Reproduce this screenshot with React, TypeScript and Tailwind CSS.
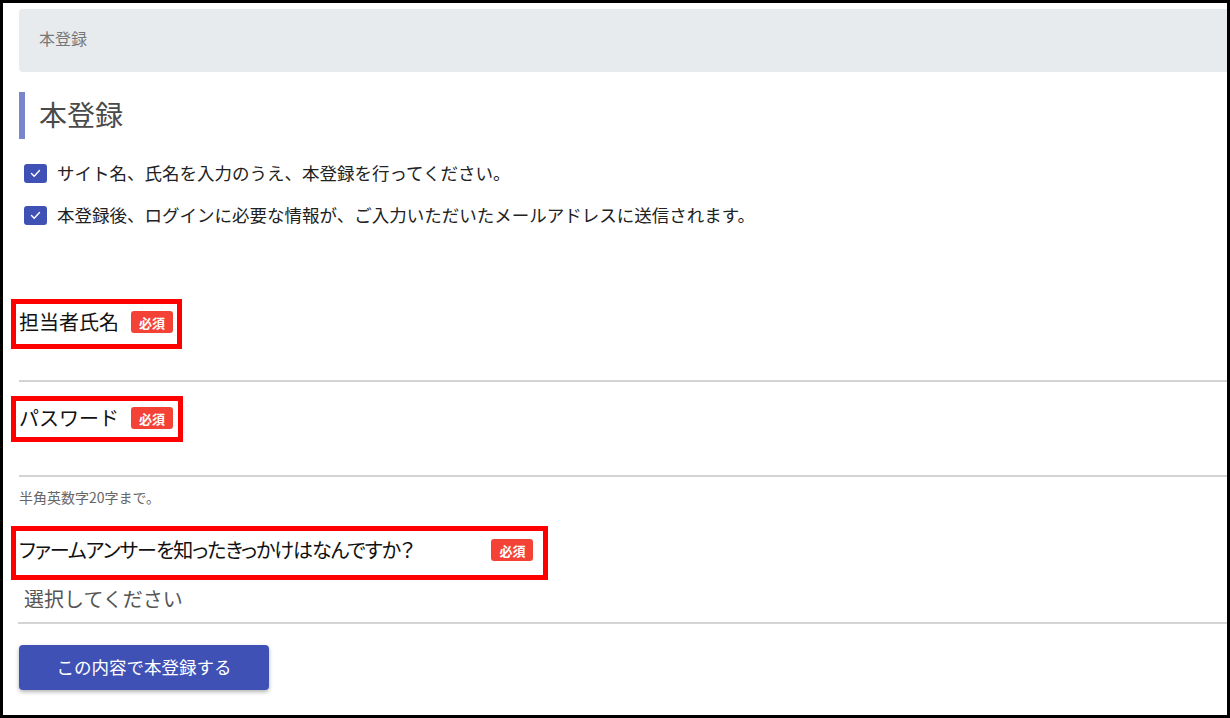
import React from 'react';

const jp = "font-['Noto_Sans_CJK_JP','Noto_Sans',sans-serif]";

function Required({ gap = 'ml-[12px]' }: { gap?: string }) {
  return (
    <span className={`${gap} inline-flex h-[22px] w-[42px] items-center justify-center rounded-[3px] bg-[#f44336] text-[13px] font-bold leading-none text-white`}>
      必須
    </span>
  );
}

function CheckBox() {
  return (
    <span className="ml-[5px] inline-flex h-[19px] w-[23px] shrink-0 items-center justify-center rounded-[3px] bg-[#3f51b5]">
      <svg width="11" height="9" viewBox="0 0 11 9" fill="none">
        <path d="M1.5 4.6 L4.2 7.2 L9.5 1.6" stroke="white" strokeWidth="1.4" strokeLinecap="round" strokeLinejoin="round" />
      </svg>
    </span>
  );
}

// red annotation frame drawn over the label
function Frame({ top, height, width }: { top: string; height: string; width: string }) {
  return <div className={`pointer-events-none absolute left-[-8px] border-[5px] border-[#ff0000] ${top} ${height} ${width}`} />;
}

export default function App() {
  const notes = [
    'サイト名、氏名を入力のうえ、本登録を行ってください。',
    '本登録後、ログインに必要な情報が、ご入力いただいたメールアドレスに送信されます。',
  ];

  return (
    <div className={`h-[718px] w-[1230px] overflow-hidden border-[3px] border-black bg-white ${jp}`}>
      <div className="pl-[16px] pt-[6px]">
        {/* breadcrumb */}
        <div className="flex h-[63px] items-center rounded-l-[4px] bg-[#e8ebee] pb-[5px] pl-[20px] text-[16px] text-[#777777]">
          本登録
        </div>

        {/* heading */}
        <div className="mt-[20px] flex items-center">
          <div className="h-[47px] w-[6px] bg-[#7986cb]" />
          <h1 className="ml-[14px] pb-[3px] text-[28px] leading-none text-[#4a4a4a]">本登録</h1>
        </div>

        {/* notes */}
        <ul className="mt-[13px]">
          {notes.map((n) => (
            <li key={n} className="flex h-[42px] items-center gap-[10px] text-[17.5px] text-[#222222]">
              <CheckBox />
              <span>{n}</span>
            </li>
          ))}
        </ul>

        {/* name */}
        <div className="mt-[66px]">
          <div className="relative flex h-[40px] items-center text-[20px] text-[#111111]">
            <Frame top="top-[-3px]" height="h-[50px]" width="w-[171px]" />
            <span>担当者氏名</span>
            <Required />
          </div>
          <div className="h-[40px] border-b-2 border-[#d4d4d4]" />
        </div>

        {/* password */}
        <div className="mt-[16px]">
          <div className="relative flex h-[40px] items-center text-[20px] text-[#111111]">
            <Frame top="top-[-2px]" height="h-[46px]" width="w-[172px]" />
            <span>パスワード</span>
            <Required />
          </div>
          <div className="h-[39px] border-b-2 border-[#d4d4d4]" />
          <p className="mt-[11px] text-[14px] leading-[18px] text-[#666666]">半角英数字20字まで。</p>
        </div>

        {/* source */}
        <div className="mt-[24px]">
          <div className="relative flex h-[40px] items-center text-[20px] text-[#111111]">
            <Frame top="top-[-4px]" height="h-[54px]" width="w-[537px]" />
            <span className="tracking-[-1px] [font-feature-settings:'palt']">ファームアンサーを知ったきっかけはなんですか？</span>
            <Required gap="ml-[78px]" />
          </div>
          <div className="-ml-[1px] h-[54px] border-b-2 border-[#d4d4d4] pl-[6px] pt-[15px] text-[20px] leading-[28px] text-[#555555]">
            選択してください
          </div>
        </div>

        <button className="mt-[21px] h-[45px] w-[250px] rounded-[4px] bg-[#3f51b5] text-[17.5px] text-white shadow-[0_2px_4px_rgba(0,0,0,0.3)]">
          この内容で本登録する
        </button>
      </div>
    </div>
  );
}
